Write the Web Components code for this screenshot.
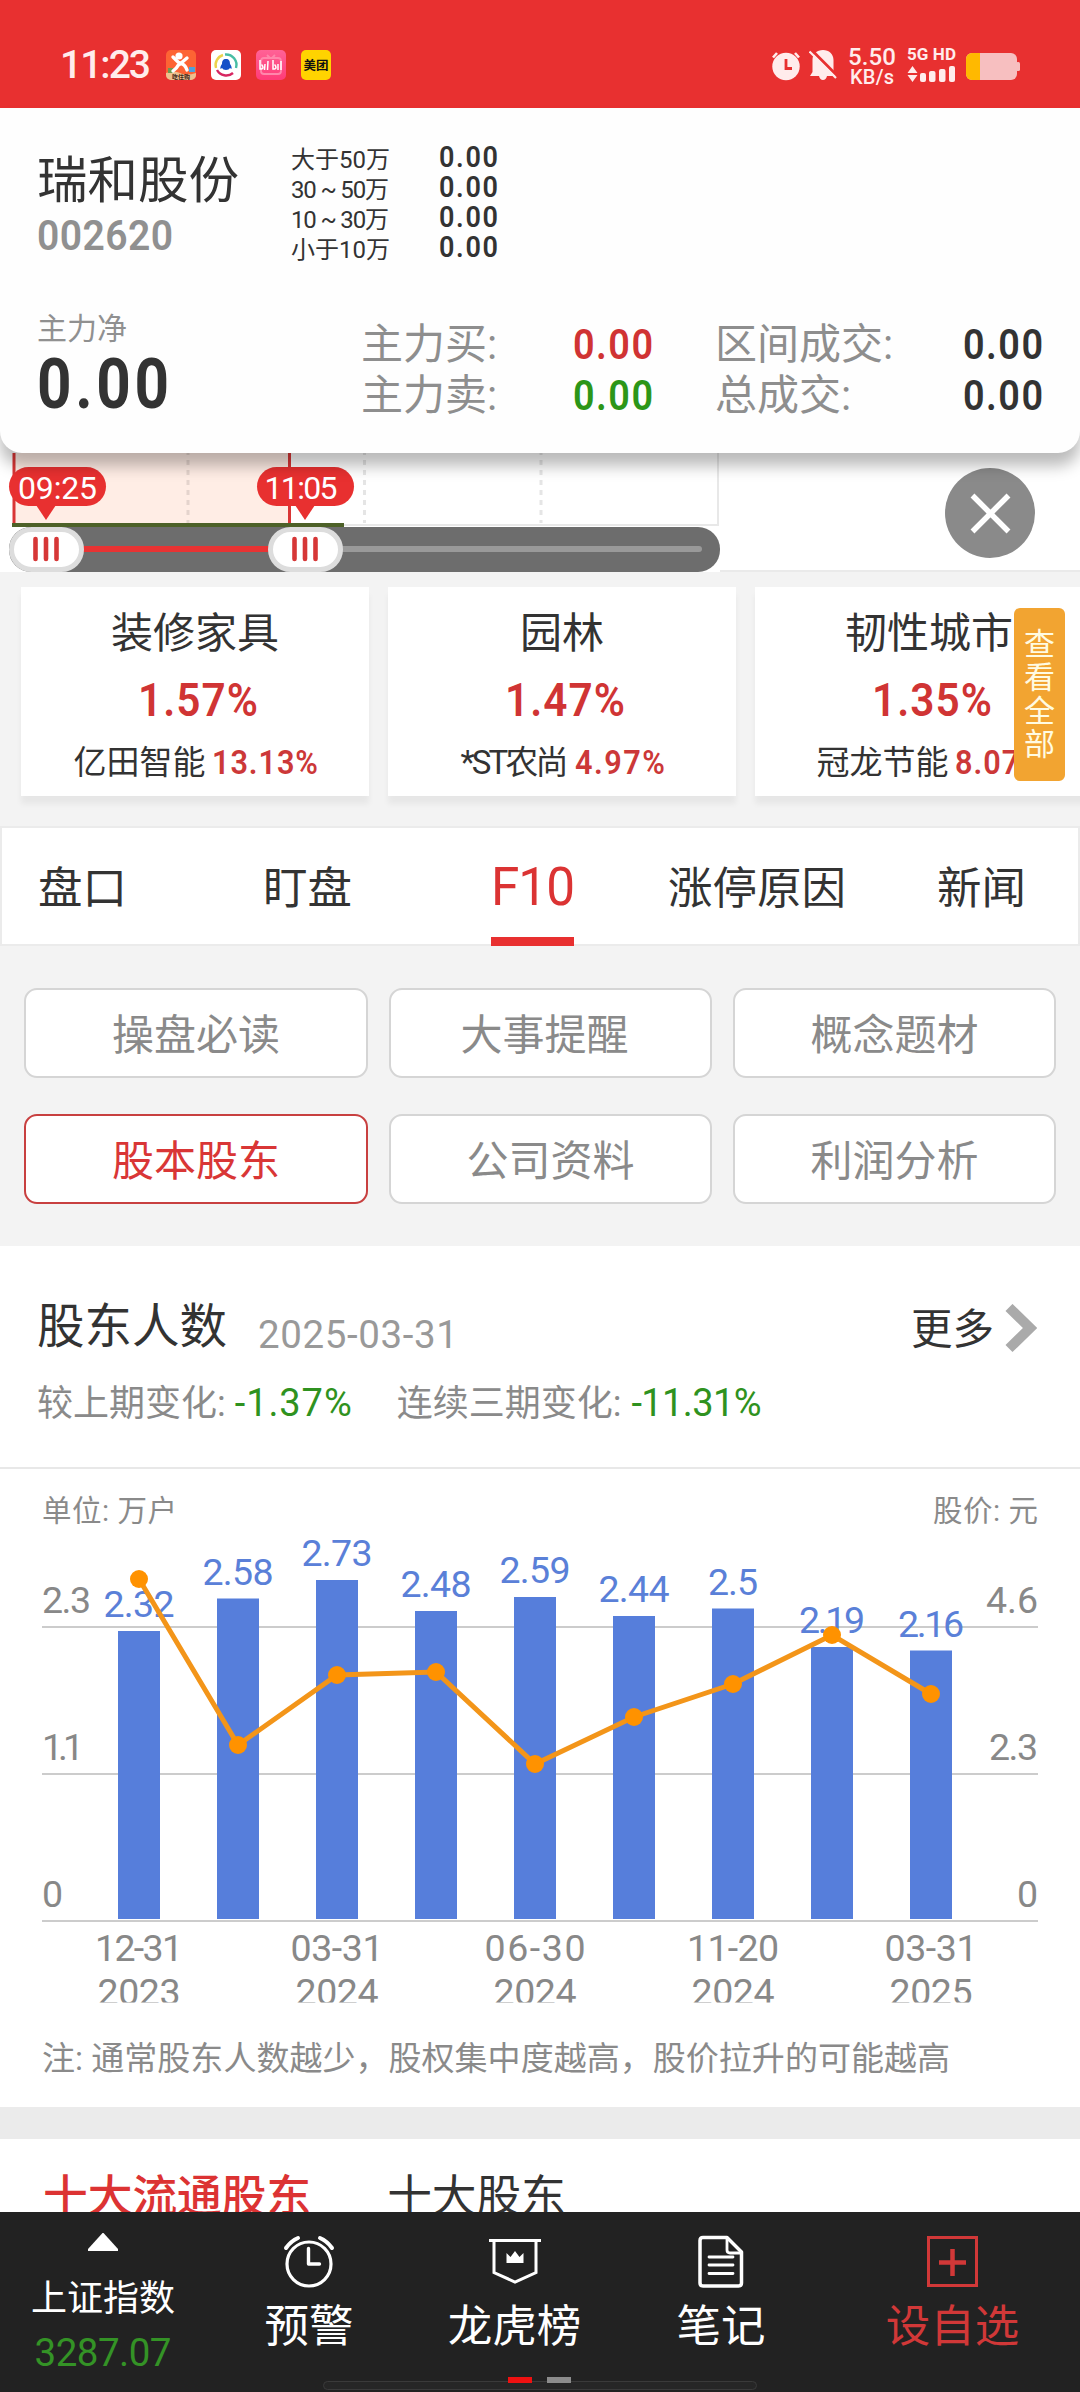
<!DOCTYPE html>
<html lang="zh-CN">
<head>
<meta charset="utf-8">
<meta name="viewport" content="width=1080">
<title>瑞和股份 002620</title>
<style>
html,body{margin:0;padding:0}
body{width:1080px;height:2392px;overflow:hidden;background:#fff;font-family:Roboto,"Noto Sans CJK SC",sans-serif;color:#333}
</style>
</head>
<body>
<stock-app></stock-app>
<script>
const define = (name, html, ready) => {
  const tpl = document.createElement('template');
  tpl.innerHTML = html;
  customElements.define(name, class extends HTMLElement {
    connectedCallback() {
      if (this.shadowRoot) return;
      this.attachShadow({ mode: 'open' }).append(tpl.content.cloneNode(true));
      if (ready) ready(this, this.shadowRoot);
    }
  });
};

/* One line of text. s = size, w = line width (tracking is adjusted to fill it),
   k = horizontal condensing of the glyphs, b = weight, c = colour */
define('ui-text', `<style>
:host{display:block;white-space:nowrap;line-height:1;flex:none}
span{display:inline-block;line-height:1;vertical-align:top;transform-origin:0 0}
</style><span><slot></slot></span>`, (el, root) => {
  const span = root.querySelector('span');
  const s = el.getAttribute('s');
  if (s) { el.style.fontSize = s + 'px'; el.style.height = s + 'px'; }
  if (el.getAttribute('b')) el.style.fontWeight = el.getAttribute('b');
  if (el.getAttribute('c')) el.style.color = el.getAttribute('c');
  const w = parseFloat(el.getAttribute('w')), k = parseFloat(el.getAttribute('k')) || 1;
  if (w) {
    const n = el.textContent.length;
    span.style.letterSpacing = ((w / k - span.getBoundingClientRect().width) / (n - 1)) + 'px';
    if (k !== 1) span.style.transform = `scaleX(${k})`;
    el.style.width = w + 'px';
  }
});

define('status-bar', `<style>
:host{display:flex;height:108px;background:#e83030;color:#ffecec;box-sizing:border-box;padding:0 60px}
.apps{display:flex;gap:15px;margin:50px 0 0 15px}
svg{display:block;flex:none}
.right{display:flex;margin-left:auto}
.net{display:flex;flex-direction:column;align-items:center;margin:45px 0 0 11px;width:48px}
.cell{margin:46px 0 0 11px;width:49px}
</style>
<ui-text s="39" w="91" b="500" style="margin-top:46px">11:23</ui-text>
<div class="apps">
<svg width="30" height="30" viewBox="0 0 30 30"><rect width="30" height="30" rx="5" fill="#fd6434"/><path d="M0 23q8-3 14 0t16 0v2a5 5 0 0 1-5 5H5a5 5 0 0 1-5-5z" fill="#eec08e"/><rect x="2" y="18" width="5" height="5" fill="#6c9a53"/><rect x="23" y="17" width="6" height="5" fill="#4fa0dc"/><circle cx="13" cy="6" r="3.6" fill="#fff"/><path d="M7 7l7 7 7-6M14 13q5 1 7 7M13 14q-2 4-6 7" fill="none" stroke="#fff" stroke-width="3.4" stroke-linecap="round"/><text x="15" y="28.5" font-size="6" font-weight="700" fill="#3b2417" text-anchor="middle">吃住购</text></svg>
<svg width="30" height="30" viewBox="0 0 30 30"><rect width="30" height="30" rx="5" fill="#fff"/><path d="M5 18A10.500 10.500 0 0 1 12 5" fill="none" stroke="#ecd34c" stroke-width="2.400"/><path d="M14 4.500A10.500 10.500 0 0 1 25 18" fill="none" stroke="#48bda4" stroke-width="2.400"/><path d="M6 20a10.500 10.500 0 0 0 16 3" fill="none" stroke="#d72661" stroke-width="2.400"/><path d="M15 9c3 0 4 2 4 5 1 1 2 3 1.500 5l-1.500-1q-1 2-4 2t-4-2l-1.500 1c-.5-2 .5-4 1.500-5 0-3 1-5 4-5z" fill="#1450c8"/></svg>
<svg width="30" height="30" viewBox="0 0 30 30"><defs><linearGradient id="p" x2="0" y2="1"><stop stop-color="#ff6296"/><stop offset="1" stop-color="#ff3b78"/></linearGradient></defs><rect width="30" height="30" rx="5" fill="url(#p)"/><path d="M11 5l3 3M19 5l-3 3M8 8h14q3 0 3 3v10q0 3-3 3H8q-3 0-3-3V11q0-3 3-3z" fill="none" stroke="#ff86ab" stroke-width="1.800"/><path d="M4 10v9h1.500q3-1 0-4.500M9 14l-.5 6M12 11l-.5 9M17 10v9h1.500q3-1 0-4.500M22 14v6M25 11v9" fill="none" stroke="#fff" stroke-width="1.500"/></svg>
<svg width="30" height="30" viewBox="0 0 30 30"><rect width="30" height="30" rx="5" fill="#ffd300"/><text x="15" y="19.500" font-size="12.500" font-weight="700" fill="#111" text-anchor="middle">美团</text></svg>
</div>
<div class="right">
<svg width="30" height="30" viewBox="0 0 30 30" style="margin-top:51px"><circle cx="15" cy="15.500" r="13.700" fill="#ffecec"/><path d="M2 6.500L6 2M28 6.500L24 2" stroke="#ffecec" stroke-width="2.600"/><path d="M15 8v9.500h6" fill="none" stroke="#e83030" stroke-width="2.800"/></svg>
<svg width="28" height="32" viewBox="0 0 28 32" style="margin:49px 0 0 8px"><path d="M14 1c6 0 10.500 4 10.500 10v13l3 3H18q-1 4-4 4t-4-4H1l2.500-4V11C3.500 5 8 1 14 1z" fill="#ffecec"/><path d="M2 .5L29 27.500" stroke="#e83030" stroke-width="3"/><path d="M.5 2.500L27 29" stroke="#ffecec" stroke-width="2.200"/></svg>
<div class="net"><ui-text s="24" w="48" b="500">5.50</ui-text><ui-text s="20" w="44" b="500" style="margin-top:-2px">KB/s</ui-text></div>
<div class="cell"><ui-text s="17" w="49" b="700">5G HD</ui-text>
<svg width="49" height="18" viewBox="0 0 49 18" fill="#ffecec" style="margin-top:1px"><path d="M5.500 2l5 7h-10zM5.500 18l5-7h-10z"/><rect x="13" y="9" width="6" height="9" rx="2"/><rect x="22" y="7" width="6.500" height="11" rx="2"/><rect x="32" y="5" width="6.500" height="13" rx="2"/><rect x="42" y="2" width="6" height="16" rx="2"/></svg></div>
<svg width="54" height="27" viewBox="0 0 54 27" style="margin:53px 0 0 10px"><rect width="51" height="27" rx="6" fill="#f7bfc0"/><rect x="50" y="9" width="4" height="9" rx="1.500" fill="#f7bfc0"/><path d="M14 0H6a6 6 0 0 0-6 6v15a6 6 0 0 0 6 6h8z" fill="#ffb900"/></svg>
</div>`);

define('quote-card', `<style>
:host{display:block;position:relative;z-index:2;height:345px;box-sizing:border-box;background:#fefefe;border-radius:0 0 22px 22px;box-shadow:0 13px 15px rgba(0,0,0,.27);padding:34px 37px 0}
.top,.bottom{display:flex}
.name{width:254px;padding-top:14px}
.range{display:flex;flex-direction:column;gap:6px;padding-top:6px;width:148px}
.bottom{margin-top:52px}
.net{width:324px}
.grid{display:grid;grid-template-columns:212px 142px 248px auto;row-gap:6px;margin-top:10px}
</style>
<div class="top">
<div class="name"><ui-text s="50.500">瑞和股份</ui-text><ui-text s="42" w="136" k=".93" b="600" c="#909090" style="margin-top:8px">002620</ui-text></div>
<div class="range"><ui-text s="24">大于50万</ui-text><ui-text s="24" w="98">30 ~ 50万</ui-text><ui-text s="24" w="98">10 ~ 30万</ui-text><ui-text s="24">小于10万</ui-text></div>
<div><ui-text s="30" w="59" k=".9" b="600">0.00</ui-text><ui-text s="30" w="59" k=".9" b="600">0.00</ui-text><ui-text s="30" w="59" k=".9" b="600">0.00</ui-text><ui-text s="30" w="59" k=".9" b="600">0.00</ui-text></div>
</div>
<div class="bottom">
<div class="net"><ui-text s="30" c="#909090">主力净</ui-text><ui-text s="70" w="132" k=".86" b="700" style="margin-top:5px">0.00</ui-text></div>
<div class="grid">
<ui-text s="42" c="#8e8e8e">主力买:</ui-text><ui-text s="42" w="80" k=".9" b="600" c="#d03333">0.00</ui-text><ui-text s="42" c="#8e8e8e">区间成交:</ui-text><ui-text s="42" w="80" k=".9" b="600">0.00</ui-text>
<ui-text s="42" c="#8e8e8e">主力卖:</ui-text><ui-text s="42" w="80" k=".9" b="600" c="#2c9618">0.00</ui-text><ui-text s="42" c="#8e8e8e">总成交:</ui-text><ui-text s="42" w="80" k=".9" b="600">0.00</ui-text>
</div></div>`);

define('time-range', `<style>:host{display:block;height:119px;background:#fff}svg{display:block}</style>
<svg width="1080" height="119" viewBox="0 0 1080 119">
<rect x="14" width="276" height="72" fill="#ffede5"/>
<path d="M188 0v70M364.500 0v70M541 0v70" stroke="#000" stroke-opacity=".1" stroke-width="3" stroke-dasharray="5 5" stroke-dashoffset="3"/>
<path d="M344 72H718V0" fill="none" stroke="#e8e8e8" stroke-width="2"/>
<path d="M14 0v72M289.500 0v72" stroke="#d93636" stroke-width="3"/>
<rect x="12" y="70" width="332" height="4" fill="#4d6128"/>
<path d="M720 118h360" stroke="#eaeaea" stroke-width="2"/>
<rect x="9" y="74" width="711" height="45" rx="22" fill="#6d6d6d"/>
<rect x="300" y="93" width="402" height="6" rx="3" fill="#999"/>
<rect x="60" y="93" width="230" height="6" fill="#e83333"/>
<g id="knob"><rect x="11.500" y="76.500" width="70" height="40" rx="20" fill="#fff" stroke="#ddd" stroke-width="5"/><path d="M35.500 86v20M46 86v20M56.500 86v20" stroke="#d63737" stroke-width="4.600" stroke-linecap="round"/></g>
<use href="#knob" x="259"/>
<g fill="#e83030"><rect x="9" y="14" width="97" height="39" rx="19.500"/><path d="M36 52h20L46 67z"/></g>
<g fill="#e83030"><rect x="257" y="14" width="97" height="39" rx="19.500"/><path d="M295 52h20L305 67z"/></g>
<g fill="#fff" font-size="32" text-anchor="middle"><text x="57.500" y="45.500" textLength="79">09:25</text><text x="301" y="45.500" textLength="73">11:05</text></g>
<circle cx="990" cy="60" r="45" fill="#8a8a8a"/><path d="M972.500 42.500l36 36M1008.500 42.500l-36 36" stroke="#fff" stroke-width="5.500"/>
</svg>`);

define('sector-card', `<style>
:host{display:flex;flex-direction:column;align-items:center;flex:none;box-sizing:border-box;width:348px;height:209px;background:#fff;padding-top:26px;box-shadow:0 8px 6px rgba(0,0,0,.05)}
.pct{margin:22px 0 0 5px;height:46px}
.lead{display:flex;margin-top:23px;gap:6px;padding-left:1px}
</style><ui-text s="42"><slot name="t"></slot></ui-text><div class="pct"><slot name="p"></slot></div><div class="lead"><slot></slot></div>`);

define('sector-strip', `<style>
:host{display:flex;position:relative;height:254px;box-sizing:border-box;background:#f3f3f3;padding:15px 0 0 21px;gap:19px;overflow:hidden}
.all{position:absolute;left:1014px;top:36px;width:51px;height:173px;box-sizing:border-box;padding-top:21px;border-radius:6px;background:#f2a431;color:#fffbe2;display:flex;flex-direction:column;align-items:center;gap:2.300px}
</style>
<sector-card><span slot="t">装修家具</span><ui-text slot="p" s="46" w="120" k=".92" b="600" c="#d03434">1.57%</ui-text><ui-text s="33">亿田智能</ui-text><ui-text s="33" w="106" k=".93" b="600" c="#cc3838">13.13%</ui-text></sector-card>
<sector-card><span slot="t">园林</span><ui-text slot="p" s="46" w="120" k=".92" b="600" c="#d03434">1.47%</ui-text><ui-text s="33" w="108">*ST农尚</ui-text><ui-text s="33" w="90" k=".93" b="600" c="#cc3838">4.97%</ui-text></sector-card>
<sector-card><span slot="t">韧性城市</span><ui-text slot="p" s="46" w="120" k=".92" b="600" c="#d03434">1.35%</ui-text><ui-text s="33">冠龙节能</ui-text><ui-text s="33" w="88" k=".93" b="600" c="#cc3838">8.07%</ui-text></sector-card>
<div class="all"><ui-text s="31">查</ui-text><ui-text s="31">看</ui-text><ui-text s="31">全</ui-text><ui-text s="31">部</ui-text></div>`);

define('main-tabs', `<style>
:host{display:flex;height:120px;box-sizing:border-box;background:#fff;border:2px solid #ebebeb;padding:39px 0 0 36px}
.on{display:flex;flex-direction:column;align-items:center;width:83px;height:86px;margin:-7px 94px 0 139px}
.bar{width:83px;height:9px;flex:none;background:#e83030;margin-top:23px}
</style>
<ui-text s="44.500">盘口</ui-text><ui-text s="44.500" style="margin-left:136px">盯盘</ui-text>
<div class="on"><ui-text s="54" w="84" k=".95">F10</ui-text><div class="bar"></div></div>
<ui-text s="44.500">涨停原因</ui-text><ui-text s="44.500" style="margin-left:91px">新闻</ui-text>`, (el, root) => {
  root.querySelector('.on').style.color = '#db3333';
});

define('f10-button', `<style>
:host{display:flex;justify-content:center;height:90px;box-sizing:border-box;padding-top:25px;background:#fff;border:2px solid #d5d5d5;border-radius:13px;color:#8a8a8a}
:host([active]){border-color:#c84040;color:#d93636}
</style><ui-text s="42"><slot></slot></ui-text>`);

define('f10-menu', `<style>
:host{display:grid;grid-template-columns:344px 323px 323px;gap:36px 21px;height:300px;box-sizing:border-box;background:#f3f3f3;padding:42px 24px;align-content:start}
.shift{padding-right:12px}
</style>
<f10-button>操盘必读</f10-button><f10-button class="shift">大事提醒</f10-button><f10-button>概念题材</f10-button>
<f10-button active>股本股东</f10-button><f10-button>公司资料</f10-button><f10-button>利润分析</f10-button>`);

define('holder-summary', `<style>
:host{display:block;height:223px;box-sizing:border-box;background:#fff;border-bottom:2px solid #e8e8e8;padding:58px 43px 0 37px}
div{display:flex}
svg{display:block;margin-left:11px}
.delta{margin-top:31px}
</style>
<div><ui-text s="47.500">股东人数</ui-text>
<ui-text s="38.500" w="200" c="#999" style="margin:12px 0 0 31px">2025-03-31</ui-text>
<ui-text s="41.500" style="margin:5px 0 0 auto">更多</ui-text>
<svg width="32" height="50" viewBox="0 0 32 50"><path d="M4 3.500L25 24 4 44.500" fill="none" stroke="#aaa" stroke-width="10"/></svg></div>
<div class="delta"><ui-text s="36" c="#8a8a8a">较上期变化:</ui-text><ui-text s="38" w="117" c="#2f9220" style="margin:-2px 0 0 9px">-1.37%</ui-text><ui-text s="36" c="#8a8a8a" style="margin-left:45px">连续三期变化:</ui-text><ui-text s="38" w="130" c="#2f9220" style="margin:-2px 0 0 10px">-11.31%</ui-text></div>`);

/* Holder count (bars) against share price (line) */
define('holder-chart', `<style>:host{display:block;height:638px;background:#fff;overflow:hidden}svg{display:block}</style><div></div>`, (el, root) => {
  const Y = v => (v - 1469).toFixed(1);
  const vals = ['2.32', '2.58', '2.73', '2.48', '2.59', '2.44', '2.5', '2.19', '2.16'];
  const tops = [1631, 1598.5, 1580, 1611, 1597, 1616, 1608.500, 1647, 1650.500];
  const price = [1579, 1745, 1675, 1672, 1764, 1717, 1684, 1635, 1694];
  const dates = [['12-31', 2023, 88], ['03-31', 2024, 93], ['06-30', 2024, 101], ['11-20', 2024, 92], ['03-31', 2025, 93]];
  const cx = i => 139 + 99 * i;
  const text = (x, y, t, anchor, fill, size, w) =>
    `<text x="${x}" y="${Y(y)}" text-anchor="${anchor}" fill="${fill}" font-size="${size}"${w ? ` textLength="${w}"` : ''}>${t}</text>`;
  let s = '';
  for (const y of [1627, 1774, 1921]) s += `<rect x="42" y="${Y(y - 1)}" width="996" height="2" fill="#ccc"/>`;
  tops.forEach((y, i) => s += `<rect x="${cx(i) - 21}" y="${Y(y)}" width="42" height="${1919 - y}" fill="#567edb"/>`);
  vals.forEach((v, i) => s += text(cx(i), tops[i] - 14, v, 'middle', '#5a80d8', 37.5, v.length < 4 ? 50 : i > 6 ? 66 : 71));
  s += text(42, 1613, '2.3', 'start', '#888', 37.5, 49) + text(42, 1760, '1.1', 'start', '#888', 37.5, 42) + text(42, 1907, '0', 'start', '#888', 37.5);
  s += text(1038, 1613, '4.6', 'end', '#888', 37.5, 52) + text(1038, 1760, '2.3', 'end', '#888', 37.5, 49) + text(1038, 1907, '0', 'end', '#888', 37.5);
  s += `<polyline fill="none" stroke="#f39519" stroke-width="5" points="${price.map((y, i) => cx(i) + ',' + Y(y)).join(' ')}"/>`;
  price.forEach((y, i) => s += `<circle cx="${cx(i)}" cy="${Y(y)}" r="9" fill="#ff9200"/>`);
  let d = '';
  dates.forEach(([a, b, w], i) => d += text(cx(2 * i), 1961, a, 'middle', '#888', 37.5, w) + text(cx(2 * i), 2004.5, b, 'middle', '#888', 37.5, 83));
  s += `<clipPath id="c"><rect width="1080" height="${Y(2002.5)}"/></clipPath><g clip-path="url(#c)">${d}</g>`;
  s += text(42, 1520.5, '单位: 万户', 'start', '#8a8a8a', 29.5, 135) + text(1038, 1520.5, '股价: 元', 'end', '#8a8a8a', 29.5, 105);
  s += text(42, 2069.5, '注: 通常股东人数越少，股权集中度越高，股价拉升的可能越高', 'start', '#8a8a8a', 33, 908);
  root.querySelector('div').innerHTML = `<svg width="1080" height="638" viewBox="0 0 1080 638">${s}</svg>`;
});

define('holder-tabs', `<style>
:host{display:flex;height:105px;box-sizing:border-box;border-top:32px solid #ebebeb;background:#fff;padding:36px 0 0 43px;overflow:hidden;gap:76px}
</style><ui-text s="44.700" b="500" c="#dc3333">十大流通股东</ui-text><ui-text s="44.700">十大股东</ui-text>`);

define('bottom-bar', `<style>
:host{display:grid;grid-template-columns:206px 206px 205px 208px 255px;position:relative;height:180px;background:#222;color:#fff}
.i{display:flex;flex-direction:column;align-items:center;padding-top:23px}
.i ui-text{margin-top:16px}
svg{display:block;overflow:visible}
.home{position:absolute;left:323px;top:169px;width:434px;height:9px;box-sizing:border-box;border:1px solid #3a3a3a;border-radius:5px;background:#262626}
.dot{position:absolute;top:165px;width:24px;height:6px}
</style>
<div class="i" style="padding-top:21px"><svg width="30" height="18"><path d="M14.500 0h1L30 16v2H0v-2z" fill="#fff"/></svg><ui-text s="36" style="margin-top:30px">上证指数</ui-text><ui-text s="38.500" w="137" c="#349326" style="margin-top:17px">3287.07</ui-text></div>
<div class="i"><svg width="50" height="54" viewBox="0 0 50 54" fill="none" stroke="#fff" stroke-linecap="round" stroke-linejoin="round"><circle cx="25" cy="29" r="22" stroke-width="3.200"/><path d="M2 13q5-7 12-10M36 3q7 3 12 10" stroke-width="4"/><path d="M24.500 13.500V29h11" stroke-width="3.400"/></svg><ui-text s="44.500">预警</ui-text></div>
<div class="i"><svg width="52" height="54" viewBox="0 0 52 54" fill="none" stroke="#fff"><path d="M0 5.500h52M5 5v32.500L26 47l21-9.500V5" stroke-width="3"/><path d="M17.500 18l4 4 4.500-6 4.500 6 4-4v10h-17z" fill="#fff" stroke="none"/></svg><ui-text s="44.500">龙虎榜</ui-text></div>
<div class="i"><svg width="46" height="54" viewBox="0 0 46 54" fill="none" stroke="#fff" stroke-linejoin="round" stroke-linecap="round"><path d="M5 2.500h24L43.500 17v31q0 3-3 3H5q-3 0-3-3V5.500q0-3 3-3z" stroke-width="3.500"/><path d="M29 3v12q0 3 3 3h11M11 22h24M11 30h24M11 38.500h24" stroke-width="2.800"/></svg><ui-text s="44.500">笔记</ui-text></div>
<div class="i" style="color:#d13838"><svg width="51" height="54" viewBox="0 0 51 54" fill="none" stroke="#d13838"><rect x="1.500" y="2.500" width="48" height="48" stroke-width="3"/><path d="M12 27.500h27M25.500 14v27" stroke-width="4.500"/></svg><ui-text s="44.500">设自选</ui-text></div>
<div class="home"></div><div class="dot" style="left:508px;background:#ee1111"></div><div class="dot" style="left:547px;background:#8c8c8c"></div>`);

define('stock-app', `<style>:host{display:flex;flex-direction:column;width:1080px;height:2392px}:host>*{flex:none}</style>
<status-bar></status-bar><quote-card></quote-card><time-range></time-range><sector-strip></sector-strip><main-tabs></main-tabs><f10-menu></f10-menu><holder-summary></holder-summary><holder-chart></holder-chart><holder-tabs></holder-tabs><bottom-bar></bottom-bar>`);
</script>
</body>
</html>
